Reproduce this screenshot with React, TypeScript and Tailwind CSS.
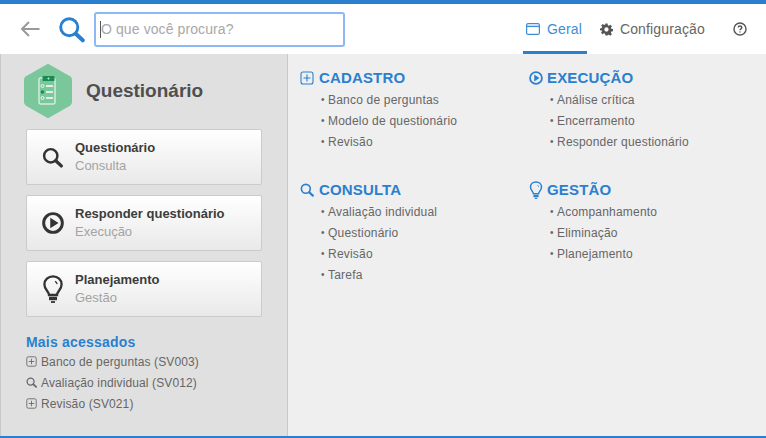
import { ReactNode } from 'react';

const font = { fontFamily: '"Liberation Sans", Arial, sans-serif' };

function PlusBox({ className }: { className: string }) {
  return (
    <svg viewBox="0 0 14 14" className={className} fill="none" stroke="currentColor" strokeWidth="1.100">
      <rect x="1" y="1" width="12" height="12" rx="2" />
      <path d="M7 3.500v7M3.500 7h7" />
    </svg>
  );
}

function Search({ className, width = 2 }: { className: string; width?: number }) {
  return (
    <svg viewBox="0 0 24 24" className={className} fill="none" stroke="currentColor" strokeWidth={width} strokeLinecap="round">
      <circle cx="10" cy="10" r="7.600" />
      <path d="M15.800 15.800 22 21.600" strokeWidth={width * 1.35} />
    </svg>
  );
}

function Play({ className, width = 3.2 }: { className: string; width?: number }) {
  return (
    <svg viewBox="0 0 24 24" className={className} fill="none" stroke="currentColor" strokeWidth={width}>
      <circle cx="12" cy="12" r="10.200" />
      <path d="M9 6.200v11.600l9-5.800z" fill="currentColor" stroke="none" />
    </svg>
  );
}

function Bulb({ className }: { className: string }) {
  return (
    <svg viewBox="0 0 20 28" className={className} fill="none" stroke="currentColor" strokeWidth="2.300">
      <path d="M6 20c0-3.400-4.600-5.600-4.600-10.600C1.400 4.800 5.200 1.400 10 1.400s8.600 3.400 8.600 8c0 5-4.600 7.200-4.600 10.600z" />
      <path d="M12 6.400c1.200.5 2 1.600 2.200 2.800" strokeWidth="1.200" />
      <path d="M6 23.500h8" strokeWidth="3.400" />
      <path d="M8 27h4" strokeWidth="1.800" />
    </svg>
  );
}

function AppIcon() {
  return (
    <svg viewBox="0 0 50 56" className="h-[56px] w-[50px]">
      <path
        d="M25 .8 47 13.200Q49 14.400 49 16.800V39.200Q49 41.600 47 42.800L25 55.200 3 42.800Q1 41.600 1 39.200V16.800Q1 14.400 3 13.200Z"
        fill="#7bc79c"
      />
      <rect x="16" y="15" width="16" height="26" rx="1" fill="none" stroke="#fff" strokeWidth="1" />
      <rect x="19.500" y="13" width="12" height="5" rx="0.800" fill="#1d8a52" />
      <path d="M25.500 14v3M24 15.500h3" stroke="#9fe0bb" strokeWidth="0.700" />
      <circle cx="19.500" cy="23" r="1.500" fill="none" stroke="#fff" strokeWidth="0.800" />
      <circle cx="19.500" cy="29" r="1.800" fill="#1d8a52" />
      <circle cx="19.500" cy="35" r="1.500" fill="none" stroke="#fff" strokeWidth="0.800" />
      <path d="M23 23h7M23 29h7M23 35h7" stroke="#fff" strokeWidth="1.300" />
    </svg>
  );
}

function ShortcutCard({ icon, title, sub }: { icon: ReactNode; title: string; sub: string }) {
  return (
    <div className="flex h-[56px] w-[236px] items-center rounded-[2px] border border-[#cbcbcb] bg-gradient-to-b from-white to-[#e9e9e9] pl-[15px]">
      <div className="flex w-[33px] items-center">{icon}</div>
      <div>
        <div className="text-[13px] leading-[18px] font-bold text-[#3c3c3c]">{title}</div>
        <div className="text-[13px] leading-[18px] text-[#a3a3a3]">{sub}</div>
      </div>
    </div>
  );
}

function MenuGroup({ icon, title, items, iconWidth }: { icon: ReactNode; title: string; items: string[]; iconWidth: string }) {
  return (
    <div className="h-[112px]">
      <div className="flex h-[20px] items-center">
        <div className={`flex items-center text-[#2a80cf] ${iconWidth}`}>{icon}</div>
        <span className="text-[15px] font-bold tracking-[0.15px] text-[#2a80cf]">{title}</span>
      </div>
      <ul className="mt-[1px]">
        {items.map((item) => (
          <li key={item} className="flex h-[21px] items-center pl-[21px] text-[12px] tracking-[0.2px] text-[#666]">
            <span className="mr-[3.500px] text-[10px] tracking-normal">•</span>
            {item}
          </li>
        ))}
      </ul>
    </div>
  );
}

export default function App() {
  return (
    <div className="flex h-[438px] w-[766px] flex-col overflow-hidden bg-white" style={font}>
      <div className="h-[4px] bg-[#2a80cf]" />
      {/* Header */}
      <header className="flex h-[50px] items-center pl-[20px]">
        <svg viewBox="0 0 20 16" className="h-[16px] w-[20px] text-[#999]" fill="none" stroke="currentColor" strokeWidth="2">
          <path d="M19.500 8H2M9 1 2 8l7 7" />
        </svg>
        <Search className="ml-[18px] h-[27px] w-[27px] text-[#2a80cf]" width={2.600} />
        <div className="ml-[9px] flex h-[35px] w-[251px] items-center rounded-[3px] border-2 border-[#8db8f5] pl-[4px] text-[14px] tracking-[0.1px] text-[#a8a8a8]">
          <span className="h-[17px] w-px bg-[#555]" />O que você procura?
        </div>
        <div className="ml-[178px] flex h-full w-[64px] items-center gap-[7px] self-stretch border-b-[3px] border-[#2a80cf] pt-[3px] pl-[3px] text-[14px] tracking-[0.15px] text-[#3d8ed8]">
          <svg viewBox="0 0 14 12" className="h-[12px] w-[14px]" fill="none" stroke="currentColor" strokeWidth="1.200">
            <rect x="0.600" y="0.600" width="12.800" height="10.800" rx="1.500" />
            <path d="M1 3.400h12" strokeWidth="1.400" />
          </svg>
          Geral
        </div>
        <div className="ml-[13px] flex w-[105px] items-center gap-[7px] text-[14px] tracking-[0.15px] text-[#666]">
          <svg viewBox="0 0 24 24" className="h-[13px] w-[13px]">
            <path
              fill="#555"
              fillRule="evenodd"
              d="M10 1h4l.6 3.200 2 .8 2.700-1.800 2.800 2.800-1.800 2.700.8 2 3.200.6v4l-3.200.6-.8 2 1.800 2.700-2.800 2.800-2.700-1.800-2 .8L14 23h-4l-.6-3.200-2-.8-2.700 1.800-2.800-2.800 1.800-2.700-.8-2L0 14v-4l3.200-.6.8-2L2.200 4.700 5 1.900l2.700 1.800 2-.8zM12 8a4 4 0 1 0 0 8 4 4 0 0 0 0-8z"
            />
          </svg>
          Configuração
        </div>
        <svg viewBox="0 0 14 14" className="ml-[28px] h-[14px] w-[14px] text-[#555]" fill="none" stroke="currentColor" strokeWidth="1.400">
          <circle cx="7" cy="7" r="6" />
          <path d="M5.200 5.600C5.200 4.500 6 4 7 4s1.800.6 1.800 1.500C8.800 6.900 7 6.800 7 8.300" />
          <path d="M7 9.400v1.200" />
        </svg>
      </header>

      {/* Body */}
      <div className="flex min-h-0 flex-1">
        <aside className="w-[288px] shrink-0 border-x border-x-[#c9c9c9] bg-[#e0e0e0] pt-[9px] pl-[22px]">
          <div className="flex h-[56px] items-center">
            <AppIcon />
            <h1 className="ml-[13px] text-[19px] font-bold text-[#4f4f4f]">Questionário</h1>
          </div>
          <div className="mt-[10px] flex flex-col gap-[10px] pl-[3px]">
            <ShortcutCard icon={<Search className="h-[21px] w-[21px] text-[#333]" width={2.800} />} title="Questionário" sub="Consulta" />
            <ShortcutCard icon={<Play className="h-[22px] w-[22px] text-[#333]" />} title="Responder questionário" sub="Execução" />
            <ShortcutCard icon={<Bulb className="ml-[1px] h-[28px] w-[20px] text-[#333]" />} title="Planejamento" sub="Gestão" />
          </div>
          <div className="mt-[16px] pl-[3px]">
            <h2 className="text-[14px] leading-[18px] font-bold tracking-[0.2px] text-[#2a80cf]">Mais acessados</h2>
            <ul className="text-[12px] tracking-[0.12px] text-[#666]">
              <li className="flex h-[21px] items-center gap-[4px]"><PlusBox className="h-[11px] w-[11px]" />Banco de perguntas (SV003)</li>
              <li className="flex h-[21px] items-center gap-[4px]"><Search className="h-[11px] w-[11px]" width={2.800} />Avaliação individual (SV012)</li>
              <li className="flex h-[21px] items-center gap-[4px]"><PlusBox className="h-[11px] w-[11px]" />Revisão (SV021)</li>
            </ul>
          </div>
        </aside>
        <main className="grid flex-1 grid-cols-[229px_1fr] bg-[#efefef] pt-[14px] pl-[12px]">
          <div>
            <MenuGroup iconWidth="w-[19px]" icon={<PlusBox className="h-[14px] w-[14px]" />} title="CADASTRO" items={['Banco de perguntas', 'Modelo de questionário', 'Revisão']} />
            <MenuGroup iconWidth="w-[19px]" icon={<Search className="h-[14px] w-[14px]" width={2.800} />} title="CONSULTA" items={['Avaliação individual', 'Questionário', 'Revisão', 'Tarefa']} />
          </div>
          <div>
            <MenuGroup iconWidth="w-[18px]" icon={<Play className="h-[14px] w-[14px]" width={3} />} title="EXECUÇÃO" items={['Análise crítica', 'Encerramento', 'Responder questionário']} />
            <MenuGroup iconWidth="w-[18px]" icon={<Bulb className="h-[18px] w-[14px]" />} title="GESTÃO" items={['Acompanhamento', 'Eliminação', 'Planejamento']} />
          </div>
        </main>
      </div>
      <div className="h-[2px] bg-[#2a80cf]" />
    </div>
  );
}
